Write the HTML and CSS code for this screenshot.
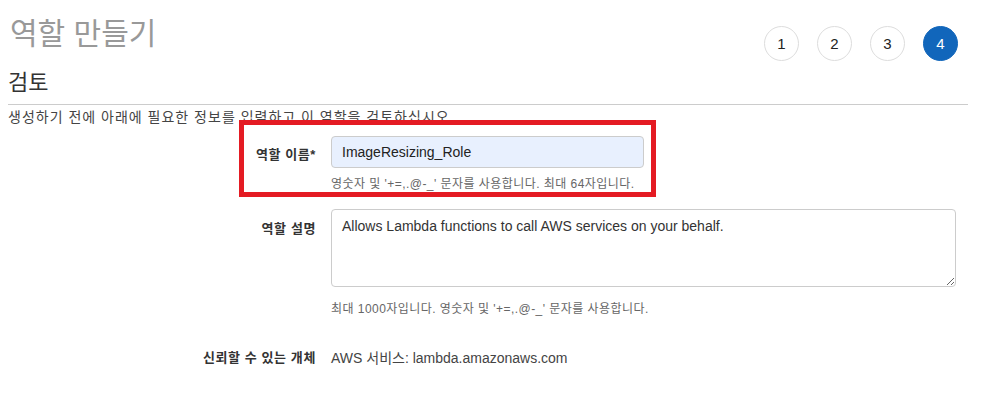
FILE: index.html
```html
<!DOCTYPE html>
<html lang="ko">
<head>
<meta charset="utf-8">
<link rel="stylesheet" href="styles.css">
</head>
<body>
<div class="page">
  <div class="header">
    <h1 class="title">역할 만들기</h1>
    <ol class="steps">
      <li class="step">1</li>
      <li class="step">2</li>
      <li class="step">3</li>
      <li class="step active">4</li>
    </ol>
  </div>
  <h2 class="section">검토</h2>
  <p class="intro">생성하기 전에 아래에 필요한 정보를 입력하고 이 역할을 검토하십시오.</p>
  <div class="form">
    <div class="label label-input">역할 이름*</div>
    <div class="field">
      <input class="input" type="text" value="ImageResizing_Role">
      <div class="help help-input">영숫자 및 '+=,.@-_' 문자를 사용합니다. 최대 64자입니다.</div>
    </div>
    <div class="label label-area">역할 설명</div>
    <div class="field">
      <textarea class="textarea">Allows Lambda functions to call AWS services on your behalf.</textarea>
      <div class="help help-area">최대 1000자입니다. 영숫자 및 '+=,.@-_' 문자를 사용합니다.</div>
    </div>
    <div class="label label-text">신뢰할 수 있는 개체</div>
    <div class="field value">AWS 서비스: lambda.amazonaws.com</div>
  </div>
  <div class="highlight"></div>
</div>
</body>
</html>
```
FILE: styles.css
```css
* { box-sizing: border-box; }
html, body { margin: 0; padding: 0; background: #fff; }
body {
  font-family: "Liberation Sans", "Noto Sans CJK KR", sans-serif;
  color: #333;
  width: 988px;
  height: 409px;
  overflow: hidden;
}
.page {
  position: relative;
  padding: 0 20px 0 8px;
}
.header {
  display: flex;
  justify-content: space-between;
  align-items: flex-start;
}
.title {
  margin: 14px 0 0 2px;
  font-size: 30px;
  font-weight: normal;
  color: #999;
  line-height: 40px;
}
.steps {
  list-style: none;
  margin: 26px 10px 0 0;
  padding: 0;
  display: flex;
  gap: 18px;
}
.step {
  width: 35px;
  height: 35px;
  border: 1px solid #ddd;
  border-radius: 50%;
  display: flex;
  align-items: center;
  justify-content: center;
  font-size: 15px;
  color: #222;
  background: #fff;
}
.step.active {
  background: #1166bb;
  border-color: #1166bb;
  color: #fff;
}
.section {
  margin: 7px 0 0 0;
  font-size: 22px;
  font-weight: normal;
  color: #333;
  line-height: 30px;
  padding-bottom: 6px;
  border-bottom: 1px solid #ccc;
}
.intro {
  margin: 2px 0 0 0;
  font-size: 14px;
  letter-spacing: 1px;
  color: #444;
  line-height: 20px;
}
.form {
  display: grid;
  grid-template-columns: 308px 1fr;
  column-gap: 15px;
  margin-top: 9px;
  margin-right: 12px;
}
.label {
  text-align: right;
  font-size: 13px;
  font-weight: bold;
  letter-spacing: 0.6px;
  color: #333;
}
.label-input { padding-top: 8px; }
.label-area { padding-top: 9px; margin-top: 16px; }
.label-text { margin-top: 30px; padding-top: 0; }
.field { display: flex; flex-direction: column; }
.input {
  width: 313px;
  height: 32px;
  border: 1px solid #ccc;
  border-radius: 4px;
  background: #e8f0fe;
  padding: 0 10px;
  font-family: "Liberation Sans", "Noto Sans CJK KR", sans-serif;
  font-size: 14px;
  color: #222;
}
.help {
  font-size: 12px;
  letter-spacing: 0.45px;
  color: #666;
  margin-top: 9px;
  line-height: 16px;
}
.help-input { margin-top: 8px; margin-bottom: 1px; }
.textarea {
  margin-top: 16px;
  width: 625px;
  height: 78px;
  border: 1px solid #ccc;
  border-radius: 4px;
  padding: 8px 10px;
  font-family: "Liberation Sans", "Noto Sans CJK KR", sans-serif;
  font-size: 14px;
  color: #333;
  resize: both;
}
.help-area { margin-top: 14px; }
.value {
  margin-top: 30px;
  font-size: 14px;
  color: #444;
}
.highlight {
  position: absolute;
  left: 239px;
  top: 120px;
  width: 417px;
  height: 77px;
  border: 5px solid #e41b23;
  pointer-events: none;
}
```
